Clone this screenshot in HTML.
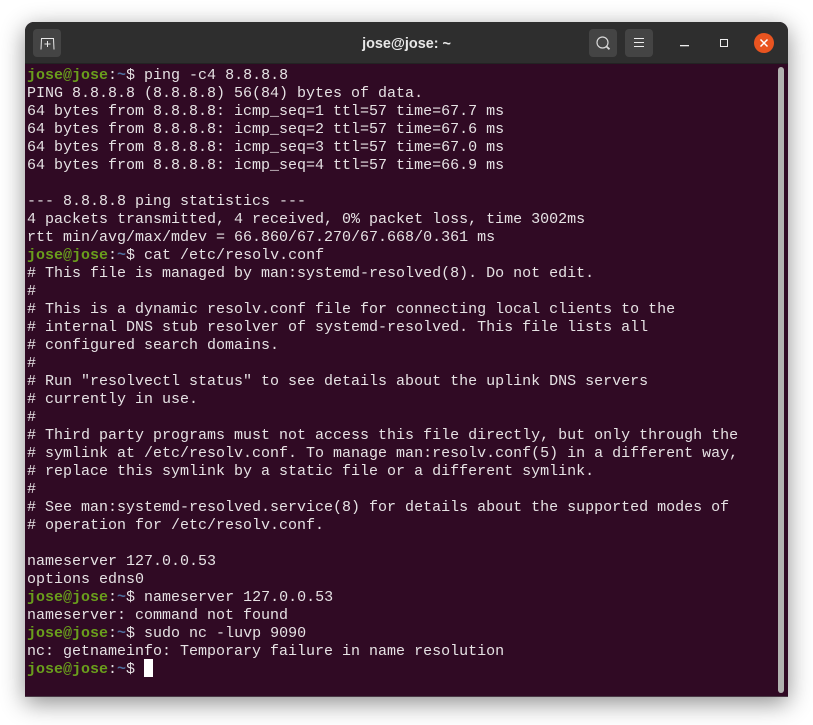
<!DOCTYPE html>
<html>
<head>
<meta charset="utf-8">
<style>
html,body{margin:0;padding:0;width:813px;height:725px;background:#fff;overflow:hidden}
#win{position:absolute;left:25px;top:22px;width:763px;height:675px;border-radius:9px 9px 0 0;background:#300a24;box-shadow:0 6px 24px rgba(0,0,0,.45);overflow:hidden}
#hdr{position:absolute;left:0;top:0;width:763px;height:42px;background:#2e2e2e;border-bottom:1px solid #232323;box-sizing:border-box}
#title{position:absolute;left:0;top:1px;width:763px;text-align:center;color:#e8e8e8;font:bold 14.4px/42px "Liberation Sans",sans-serif}
.btn{position:absolute;top:7px;width:28px;height:28px;border-radius:4px;background:#444}
#term{position:absolute;left:2px;top:45px;margin:0;font:15px/18px "Liberation Mono",monospace;color:#e6e2e4;white-space:pre;filter:blur(.25px)}
.g{color:#6a9e1c;font-weight:bold}
.b{color:#4f6f9e;font-weight:bold}
#cur{position:absolute;left:119px;top:637px;width:9px;height:18px;background:#fff}
#sb{position:absolute;left:753px;top:45px;width:6px;height:626px;border-radius:3px;background:#b2b2b0}
#edge{position:absolute;left:0;bottom:0;width:763px;height:1px;background:#4a3a46}
svg{position:absolute}
</style>
</head>
<body>
<div id="win">
<div id="hdr">
<div class="btn" style="left:8px"></div>
<svg style="left:15px;top:15px" width="15" height="13" viewBox="0 0 15 13" fill="none" stroke="#e8e8e8" stroke-width="1"><path d="M1 12.500L1.500 1.500H13.500L14 12.500"/><path d="M7.500 4v6M4.500 7h6"/></svg>
<div id="title">jose@jose: ~</div>
<div class="btn" style="left:564px"></div>
<svg style="left:571px;top:14px" width="15" height="15" viewBox="0 0 15 15" fill="none" stroke="#d8d8d8"><circle cx="6.500" cy="6.500" r="5.500" stroke-width="1.200"/><path d="M10.500 10.500l3 2.800" stroke-width="1.800"/></svg>
<div class="btn" style="left:600px"></div>
<svg style="left:608px;top:15px" width="12" height="12" viewBox="0 0 12 12" stroke="#ececec" stroke-width="1"><path d="M1 1.500h10M1 5.500h10M1 9.500h10"/></svg>
<svg style="left:655px;top:23px" width="10" height="2"><rect width="9" height="1.300" fill="#eee"/></svg>
<svg style="left:695px;top:17px" width="9" height="9" fill="none" stroke="#eee"><rect x=".5" y=".5" width="7" height="7" stroke-width="1"/></svg>
<svg style="left:729px;top:11px" width="20" height="20" viewBox="0 0 20 20"><circle cx="10" cy="10" r="10" fill="#e95420"/><path d="M6.500 6.500l7 7M13.500 6.500l-7 7" stroke="#fff" stroke-width="1.500"/></svg>
</div>
<pre id="term"><span class="g">jose@jose</span>:<span class="b">~</span>$ ping -c4 8.8.8.8
PING 8.8.8.8 (8.8.8.8) 56(84) bytes of data.
64 bytes from 8.8.8.8: icmp_seq=1 ttl=57 time=67.7 ms
64 bytes from 8.8.8.8: icmp_seq=2 ttl=57 time=67.6 ms
64 bytes from 8.8.8.8: icmp_seq=3 ttl=57 time=67.0 ms
64 bytes from 8.8.8.8: icmp_seq=4 ttl=57 time=66.9 ms

--- 8.8.8.8 ping statistics ---
4 packets transmitted, 4 received, 0% packet loss, time 3002ms
rtt min/avg/max/mdev = 66.860/67.270/67.668/0.361 ms
<span class="g">jose@jose</span>:<span class="b">~</span>$ cat /etc/resolv.conf
# This file is managed by man:systemd-resolved(8). Do not edit.
#
# This is a dynamic resolv.conf file for connecting local clients to the
# internal DNS stub resolver of systemd-resolved. This file lists all
# configured search domains.
#
# Run "resolvectl status" to see details about the uplink DNS servers
# currently in use.
#
# Third party programs must not access this file directly, but only through the
# symlink at /etc/resolv.conf. To manage man:resolv.conf(5) in a different way,
# replace this symlink by a static file or a different symlink.
#
# See man:systemd-resolved.service(8) for details about the supported modes of
# operation for /etc/resolv.conf.

nameserver 127.0.0.53
options edns0
<span class="g">jose@jose</span>:<span class="b">~</span>$ nameserver 127.0.0.53
nameserver: command not found
<span class="g">jose@jose</span>:<span class="b">~</span>$ sudo nc -luvp 9090
nc: getnameinfo: Temporary failure in name resolution
<span class="g">jose@jose</span>:<span class="b">~</span>$ </pre>
<div id="cur"></div>
<div id="sb"></div>
<div id="edge"></div>
</div>
</body>
</html>
